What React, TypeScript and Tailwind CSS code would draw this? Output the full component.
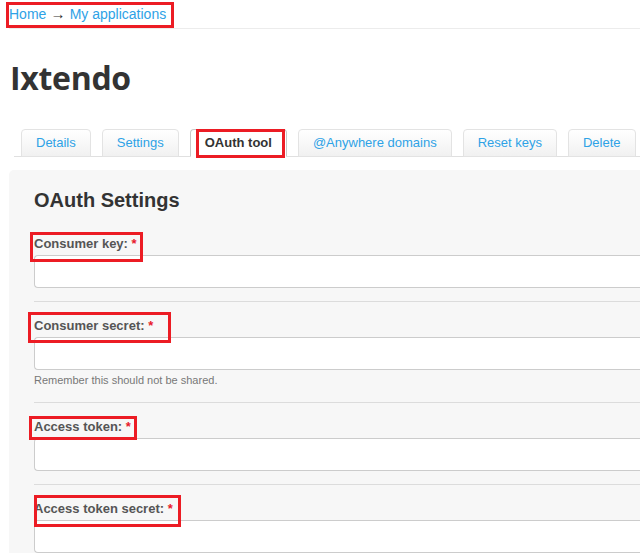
import React from "react";

const tabs = ["Details", "Settings", "OAuth tool", "@Anywhere domains", "Reset keys", "Delete"];

function Field({ label, help, last, box }: { label: string; help?: string; last?: boolean; box: string }) {
  return (
    <div className={`pt-[16px] ${help ? "pb-[14px]" : "pb-[13px]"} ${last ? "" : "border-b border-[#dcdcdc]"}`}>
      <div className="text-[13px] leading-[16px] font-bold text-[#555]">
        <span className="relative inline-block">
          {label} <span className="text-[#e8192c]">*</span>
          <span className={`absolute border-[3px] border-[#ec1c24] ${box}`} />
        </span>
      </div>
      <div className="mt-[3px] h-[33px] bg-white border border-[#cccccc] rounded-l-[4px] border-r-0" />
      {help && <div className="mt-[3px] text-[11px] leading-[15px] text-[#777]">{help}</div>}
    </div>
  );
}

export default function App() {
  return (
    <div className="w-[640px] h-[553px] overflow-hidden bg-white font-['Liberation_Sans',Arial,sans-serif]">
      <div className="ml-[9px] h-[29px] border-b border-[#ececec] pt-[5px] text-[14px] leading-[17px]">
        <span className="relative inline-block">
          <span className="text-[#2ea2e6]">Home</span>
          <span className="text-[#333] text-[15px]"> → </span>
          <span className="text-[#2ea2e6]">My applications</span>
          <span className="absolute -left-[3px] -top-[3px] -right-[8px] -bottom-[5px] border-[3px] border-[#ec1c24]" />
        </span>
      </div>

      <h1 className="ml-[10px] mt-[30px] text-[32px] leading-[38px] font-bold text-[#333] font-['Open_Sans',sans-serif] tracking-[-0.3px]">
        Ixtendo
      </h1>

      <div className="ml-[14px] mt-[32px] w-[700px] flex items-end gap-[11px] pl-[7px] border-b border-[#e0e0e0]">
        {tabs.map((t) => {
          const active = t === "OAuth tool";
          return (
            <div
              key={t}
              className={`relative h-[28px] -mb-px px-[14px] flex items-center text-[13px] rounded-t-[4px] border ${
                active
                  ? "bg-white border-[#c8c8c8] border-b-white text-[#333] font-bold"
                  : "bg-gradient-to-b from-white to-[#f1f1f1] border-[#e3e3e3] text-[#2ea2e6]"
              }`}
            >
              {t}
              {active && (
                <span className="absolute left-[5px] -top-px right-[1px] -bottom-[2px] border-[3px] border-[#ec1c24]" />
              )}
            </div>
          );
        })}
      </div>

      <div className="ml-[9px] mt-[13px] w-[700px] bg-[#f7f7f7] rounded-tl-[5px] pt-[18px] pl-[25px]">
        <h2 className="text-[20px] leading-[24px] font-bold text-[#333]">OAuth Settings</h2>
        <div className="mt-[8px]">
          <Field label="Consumer key:" box="-left-[4px] -top-[4px] -right-[6px] -bottom-[10px]" />
          <Field
            label="Consumer secret:"
            help="Remember this should not be shared."
            box="-left-[6px] -top-[6px] -right-[18px] -bottom-[9px]"
          />
          <Field label="Access token:" box="-left-[5px] -top-[3px] -right-[6px] -bottom-[5px]" />
          <Field label="Access token secret:" last box="left-0 -top-[6px] -right-[8px] -bottom-[10px]" />
        </div>
      </div>
    </div>
  );
}
